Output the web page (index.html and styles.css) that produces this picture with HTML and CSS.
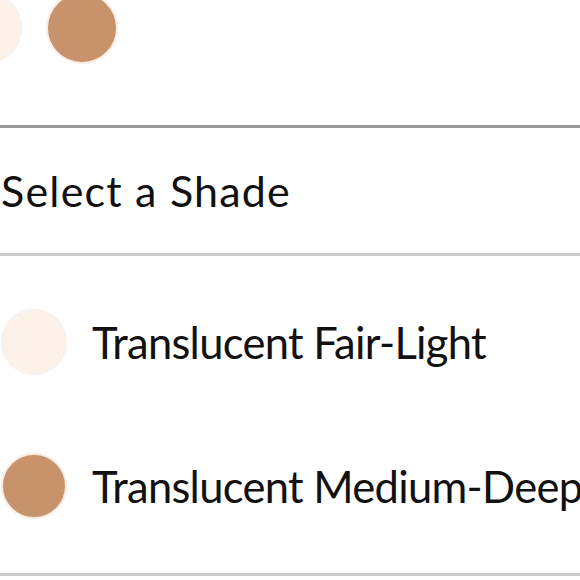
FILE: index.html
```html
<!DOCTYPE html>
<html>
<head>
<meta charset="utf-8">
<link rel="stylesheet" href="styles.css">
</head>
<body>
<div class="page">
  <div class="swatches">
    <span class="swatch swatch-top fair"></span>
    <span class="swatch swatch-top medium"></span>
  </div>
  <div class="rule rule-dark"></div>
  <div class="heading">Select a Shade</div>
  <div class="rule"></div>
  <ul class="shade-list">
    <li class="shade-item"><span class="swatch swatch-list fair"></span><span class="shade-name">Translucent Fair-Light</span></li>
    <li class="shade-item"><span class="swatch swatch-list medium"></span><span class="shade-name">Translucent Medium-Deep</span></li>
  </ul>
  <div class="rule"></div>
</div>
</body>
</html>
```
FILE: styles.css
```css
html, body {
  margin: 0;
  padding: 0;
  background: #ffffff;
  overflow: hidden;
}
.page {
  width: 580px;
  margin-top: -8px;
  font-family: Lato, "Noto Sans", sans-serif;
  color: #111111;
}
.swatches {
  display: flex;
  gap: 24px;
  margin-left: -50px;
  height: 133px;
}
.swatch {
  display: block;
  border-radius: 50%;
  flex: none;
  box-sizing: border-box;
}
.swatch-top {
  width: 72px;
  height: 72px;
}
.fair {
  background: #fcf2e7;
  border: 2px solid #f6f1ec;
}
.medium {
  background: #c8926a;
  border: 2px solid #f7ede6;
}
.rule {
  height: 3px;
  background: #c8c8c8;
}
.rule-dark {
  background: #999999;
}
.heading {
  height: 125px;
  display: flex;
  align-items: center;
  font-size: 43px;
  padding-left: 1px;
  letter-spacing: 1.2px;
  white-space: nowrap;
}
.shade-list {
  list-style: none;
  margin: 0;
  padding: 14px 0 15px;
}
.shade-item {
  display: flex;
  align-items: center;
  gap: 25px;
  padding: 39px 0 39px 1px;
}
.swatch-list {
  width: 66px;
  height: 66px;
}
.shade-name {
  font-size: 43.5px;
  letter-spacing: -0.7px;
  white-space: nowrap;
}
```
